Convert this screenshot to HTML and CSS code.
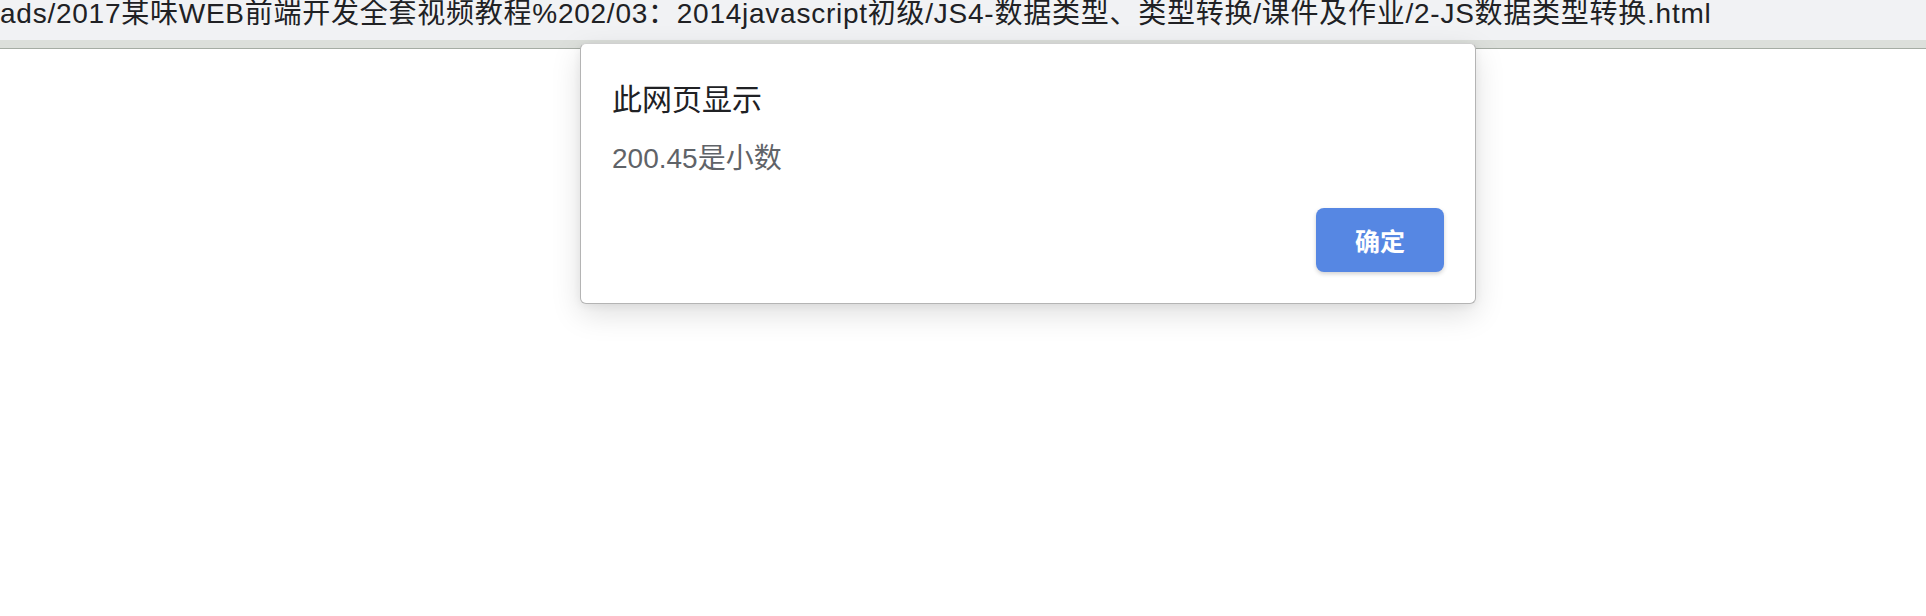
FILE: index.html
```html
<!DOCTYPE html>
<html lang="zh-CN">
<head>
<meta charset="utf-8">
<title>2-JS数据类型转换</title>
<link rel="stylesheet" href="styles.css">
</head>
<body>
<header class="topbar">
  <div class="url">ads/2017某味WEB前端开发全套视频教程%202/03：2014javascript初级/JS4-数据类型、类型转换/课件及作业/2-JS数据类型转换.html</div>
</header>
<div class="band"></div>
<main class="page"></main>
<div class="dialog" role="alertdialog">
  <div class="dialog-title">此网页显示</div>
  <div class="dialog-msg">200.45是小数</div>
  <div class="dialog-actions">
    <button class="btn-ok">确定</button>
  </div>
</div>
</body>
</html>
```
FILE: styles.css
```css
html, body {
  margin: 0;
  padding: 0;
  background: #ffffff;
  font-family: "Liberation Sans", "Noto Sans CJK SC", sans-serif;
}
body {
  width: 1926px;
  height: 616px;
  overflow: hidden;
  position: relative;
}
.topbar {
  height: 40px;
  background: #f1f2f4;
  overflow: hidden;
}
.url {
  font-size: 28px;
  line-height: 27px;
  letter-spacing: 0.75px;
  color: #202124;
  white-space: nowrap;
  padding-left: 0;
}
.band {
  height: 8px;
  background: #dcdfdb;
  border-bottom: 1px solid #a5aca4;
}
.page {
  height: 567px;
  background: #ffffff;
}
.dialog {
  position: absolute;
  left: 580px;
  top: 43px;
  width: 896px;
  height: 261px;
  background: #ffffff;
  border: 1px solid #b4b4b4;
  border-top-color: #d0d0d0;
  border-radius: 6px;
  box-shadow: 0 10px 30px rgba(0, 0, 0, 0.13), 0 2px 8px rgba(0, 0, 0, 0.06);
  box-sizing: border-box;
  padding: 37px 31px 31px 31px;
  display: flex;
  flex-direction: column;
}
.dialog-title {
  font-size: 30px;
  line-height: 38px;
  color: #202124;
}
.dialog-msg {
  font-size: 28px;
  line-height: 34px;
  color: #5f6368;
  margin-top: 23px;
}
.dialog-actions {
  margin-top: auto;
  display: flex;
  justify-content: flex-end;
}
.btn-ok {
  width: 128px;
  height: 64px;
  border: none;
  border-radius: 8px;
  background: #5687e3;
  color: #ffffff;
  font-family: "Liberation Sans", "Noto Sans CJK SC", sans-serif;
  font-size: 25px;
  font-weight: bold;
  box-shadow: 0 2px 4px rgba(0, 0, 0, 0.18);
  padding: 0;
}
```
